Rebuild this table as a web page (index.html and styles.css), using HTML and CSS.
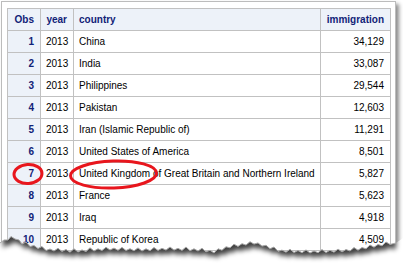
FILE: index.html
```html
<!DOCTYPE html>
<html>
<head>
<meta charset="utf-8">
<link rel="stylesheet" href="styles.css">
</head>
<body>
<div class="paper">
  <table class="report">
    <colgroup>
      <col class="c-obs"><col class="c-year"><col class="c-country"><col class="c-imm">
    </colgroup>
    <thead>
      <tr><th class="obs">Obs</th><th class="num">year</th><th class="txt">country</th><th class="num">immigration</th></tr>
    </thead>
    <tbody>
      <tr><th class="obs">1</th><td class="num">2013</td><td>China</td><td class="num">34,129</td></tr>
      <tr><th class="obs">2</th><td class="num">2013</td><td>India</td><td class="num">33,087</td></tr>
      <tr><th class="obs">3</th><td class="num">2013</td><td>Philippines</td><td class="num">29,544</td></tr>
      <tr><th class="obs">4</th><td class="num">2013</td><td>Pakistan</td><td class="num">12,603</td></tr>
      <tr><th class="obs">5</th><td class="num">2013</td><td>Iran (Islamic Republic of)</td><td class="num">11,291</td></tr>
      <tr><th class="obs">6</th><td class="num">2013</td><td>United States of America</td><td class="num">8,501</td></tr>
      <tr><th class="obs">7</th><td class="num">2013</td><td>United Kingdom of Great Britain and Northern Ireland</td><td class="num">5,827</td></tr>
      <tr><th class="obs">8</th><td class="num">2013</td><td>France</td><td class="num">5,623</td></tr>
      <tr><th class="obs">9</th><td class="num">2013</td><td>Iraq</td><td class="num">4,918</td></tr>
      <tr><th class="obs">10</th><td class="num">2013</td><td>Republic of Korea</td><td class="num">4,509</td></tr>
      <tr><th class="obs"></th><td class="num"></td><td></td><td class="num"></td></tr>
    </tbody>
  </table>
</div>
<svg class="overlay" width="403" height="268" viewBox="0 0 403 268">
  <defs>
    <clipPath id="below">
      <path d="M0,243 L4,240 L8,240 L11,236.5 L15,239 L19,240 L22,244 L26,242 L30,246.5 L34,245.5 L38,248.5 L42,246.5 L46,250.5 L50,249 L54,251 L58,248.3 L62,251.4 L66,249.5 L70,252.2 L74,248.8 L78,252 L82,249.9 L86,251.6 L90,247.8 L94,251 L98,248.8 L102,250.5 L106,247.3 L110,250 L114,248.1 L118,250.3 L122,247.4 L126,250.5 L130,248.7 L134,250.8 L138,247.9 L142,251 L146,248.8 L150,250.7 L154,247.5 L158,250.4 L162,248.3 L166,250.1 L170,247 L174,250.1 L178,248.3 L182,250.4 L186,247 L190,250.7 L194,248.8 L198,251 L202,248.3 L206,251.8 L210,250.3 L214,252.9 L218,248.8 L222,250.2 L226,246.8 L230,247.8 L234,244.2 L238,246.4 L242,243.7 L246,245.1 L250,241.7 L254,244.1 L258,242.9 L262,246.1 L266,245.3 L270,248.7 L274,247 L278,251.3 L282,250.1 L286,252.2 L290,249.3 L294,252.5 L298,250.6 L302,252.7 L306,249.9 L310,253 L314,250.9 L318,252.7 L322,249.6 L326,252.5 L330,250.3 L334,252.2 L338,249.1 L342,251.9 L346,249.5 L350,251 L354,247.6 L358,250.2 L362,247.6 L366,248.8 L370,245 L374,247.2 L378,244.5 L382,245.8 L386,242 L390,244.4 L396,243 L403,238 L403,268 L0,268 Z"/>
    </clipPath>
    <filter id="blur" x="-10%" y="-50%" width="120%" height="200%">
      <feGaussianBlur stdDeviation="2.5"/>
    </filter>
  </defs>
  <path class="cut" d="M0,243 L4,240 L8,240 L11,236.5 L15,239 L19,240 L22,244 L26,242 L30,246.5 L34,245.5 L38,248.5 L42,246.5 L46,250.5 L50,249 L54,251 L58,248.3 L62,251.4 L66,249.5 L70,252.2 L74,248.8 L78,252 L82,249.9 L86,251.6 L90,247.8 L94,251 L98,248.8 L102,250.5 L106,247.3 L110,250 L114,248.1 L118,250.3 L122,247.4 L126,250.5 L130,248.7 L134,250.8 L138,247.9 L142,251 L146,248.8 L150,250.7 L154,247.5 L158,250.4 L162,248.3 L166,250.1 L170,247 L174,250.1 L178,248.3 L182,250.4 L186,247 L190,250.7 L194,248.8 L198,251 L202,248.3 L206,251.8 L210,250.3 L214,252.9 L218,248.8 L222,250.2 L226,246.8 L230,247.8 L234,244.2 L238,246.4 L242,243.7 L246,245.1 L250,241.7 L254,244.1 L258,242.9 L262,246.1 L266,245.3 L270,248.7 L274,247 L278,251.3 L282,250.1 L286,252.2 L290,249.3 L294,252.5 L298,250.6 L302,252.7 L306,249.9 L310,253 L314,250.9 L318,252.7 L322,249.6 L326,252.5 L330,250.3 L334,252.2 L338,249.1 L342,251.9 L346,249.5 L350,251 L354,247.6 L358,250.2 L362,247.6 L366,248.8 L370,245 L374,247.2 L378,244.5 L382,245.8 L386,242 L390,244.4 L396,243 L403,238 L403,268 L0,268 Z"/>
  <g clip-path="url(#below)">
    <path class="shade" filter="url(#blur)" transform="translate(3,5)" d="M0,243 L4,240 L8,240 L11,236.5 L15,239 L19,240 L22,244 L26,242 L30,246.5 L34,245.5 L38,248.5 L42,246.5 L46,250.5 L50,249 L54,251 L58,248.3 L62,251.4 L66,249.5 L70,252.2 L74,248.8 L78,252 L82,249.9 L86,251.6 L90,247.8 L94,251 L98,248.8 L102,250.5 L106,247.3 L110,250 L114,248.1 L118,250.3 L122,247.4 L126,250.5 L130,248.7 L134,250.8 L138,247.9 L142,251 L146,248.8 L150,250.7 L154,247.5 L158,250.4 L162,248.3 L166,250.1 L170,247 L174,250.1 L178,248.3 L182,250.4 L186,247 L190,250.7 L194,248.8 L198,251 L202,248.3 L206,251.8 L210,250.3 L214,252.9 L218,248.8 L222,250.2 L226,246.8 L230,247.8 L234,244.2 L238,246.4 L242,243.7 L246,245.1 L250,241.7 L254,244.1 L258,242.9 L262,246.1 L266,245.3 L270,248.7 L274,247 L278,251.3 L282,250.1 L286,252.2 L290,249.3 L294,252.5 L298,250.6 L302,252.7 L306,249.9 L310,253 L314,250.9 L318,252.7 L322,249.6 L326,252.5 L330,250.3 L334,252.2 L338,249.1 L342,251.9 L346,249.5 L350,251 L354,247.6 L358,250.2 L362,247.6 L366,248.8 L370,245 L374,247.2 L378,244.5 L382,245.8 L386,242 L390,244.4 L393,243 L393,200 L0,200 Z"/>
  </g>
  <path class="edge" d="M0,243 L4,240 L8,240 L11,236.5 L15,239 L19,240 L22,244 L26,242 L30,246.5 L34,245.5 L38,248.5 L42,246.5 L46,250.5 L50,249 L54,251 L58,248.3 L62,251.4 L66,249.5 L70,252.2 L74,248.8 L78,252 L82,249.9 L86,251.6 L90,247.8 L94,251 L98,248.8 L102,250.5 L106,247.3 L110,250 L114,248.1 L118,250.3 L122,247.4 L126,250.5 L130,248.7 L134,250.8 L138,247.9 L142,251 L146,248.8 L150,250.7 L154,247.5 L158,250.4 L162,248.3 L166,250.1 L170,247 L174,250.1 L178,248.3 L182,250.4 L186,247 L190,250.7 L194,248.8 L198,251 L202,248.3 L206,251.8 L210,250.3 L214,252.9 L218,248.8 L222,250.2 L226,246.8 L230,247.8 L234,244.2 L238,246.4 L242,243.7 L246,245.1 L250,241.7 L254,244.1 L258,242.9 L262,246.1 L266,245.3 L270,248.7 L274,247 L278,251.3 L282,250.1 L286,252.2 L290,249.3 L294,252.5 L298,250.6 L302,252.7 L306,249.9 L310,253 L314,250.9 L318,252.7 L322,249.6 L326,252.5 L330,250.3 L334,252.2 L338,249.1 L342,251.9 L346,249.5 L350,251 L354,247.6 L358,250.2 L362,247.6 L366,248.8 L370,245 L374,247.2 L378,244.5 L382,245.8 L386,242 L390,244.4 L396,243"/>
  <ellipse class="mark" cx="28" cy="174" rx="14" ry="9.5" transform="rotate(-4 28 174)"/>
  <ellipse class="mark" cx="113.5" cy="174.5" rx="43" ry="13.5" transform="rotate(-2 113.5 174.5)"/>
</svg>
</body>
</html>
```

FILE: styles.css
```css
html, body {
  margin: 0;
  padding: 0;
  background: #fff;
}
body {
  width: 403px;
  height: 268px;
  overflow: hidden;
  position: relative;
  font-family: "Liberation Sans", Arial, sans-serif;
  font-size: 10px;
}
.paper {
  margin: 1px 0 0 1px;
  width: 383px;
  height: 270px;
  padding: 6px 5px 0 5px;
  border: 1px solid #bcbcbc;
  background: #fff;
  box-shadow: 3px 3px 4px rgba(0, 0, 0, 0.45);
}
.report {
  border-collapse: collapse;
  table-layout: fixed;
  width: 383px;
  border: 1px solid #c1c1c1;
}
.c-obs { width: 33px; }
.c-year { width: 33px; }
.c-country { width: 247px; }
.c-imm { width: 70px; }
.report th,
.report td {
  box-sizing: border-box;
  border: 1px solid #c1c1c1;
  height: 22px;
  padding: 0 6px 0 5px;
  vertical-align: middle;
  white-space: nowrap;
  overflow: hidden;
}
.report thead th {
  background: #edf2f9;
  color: #112277;
  font-weight: bold;
}
.report tbody th.obs {
  background: #edf2f9;
  color: #112277;
  font-weight: bold;
}
.report td {
  color: #000;
  background: #fff;
}
.report .obs { text-align: right; }
.report .num { text-align: right; }
.report .txt { text-align: left; }
.overlay {
  position: absolute;
  left: 0;
  top: 0;
  pointer-events: none;
}
.cut { fill: #fff; }
.shade { fill: rgba(0, 0, 0, 0.75); }
.edge { fill: none; stroke: #a8a8a8; stroke-width: 1; }
.mark { fill: none; stroke: #e8161d; stroke-width: 3; }
```
